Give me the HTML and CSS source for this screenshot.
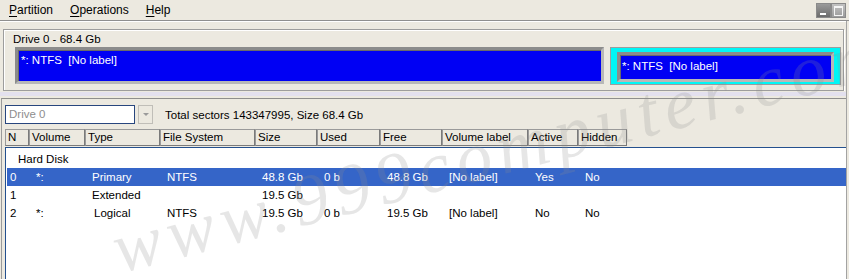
FILE: index.html
```html
<!DOCTYPE html>
<html>
<head>
  <title>Partition</title>
  <link rel="stylesheet" href="styles.css">
</head>
<body>
  <div class="app">
    <div class="menubar">
      <span class="menu"><u>P</u>artition</span>
      <span class="menu"><u>O</u>perations</span>
      <span class="menu"><u>H</u>elp</span>
      <div class="wincontrols">
        <span class="wbtn wmin"></span>
        <span class="wbtn wmax"></span>
      </div>
    </div>

    <div class="panes">
      <div class="top-pane">
        <div class="drive-frame">
          <div class="drive-title">Drive 0 - 68.4 Gb</div>
          <div class="parts">
            <div class="part part-big">*: NTFS&nbsp; [No label]</div>
            <div class="part-sel">
              <div class="part part-small">*: NTFS&nbsp; [No label]</div>
            </div>
          </div>
        </div>
      </div>

      <div class="splitter"></div>

      <div class="bottom-pane">
        <div class="toolbar">
          <div class="combo">Drive 0</div>
          <div class="combo-btn"><span class="arrow"></span></div>
          <div class="total">Total sectors 143347995, Size 68.4 Gb</div>
        </div>

        <div class="grid-head">
          <div class="hcell">N</div>
          <div class="hcell">Volume</div>
          <div class="hcell">Type</div>
          <div class="hcell">File System</div>
          <div class="hcell">Size</div>
          <div class="hcell">Used</div>
          <div class="hcell">Free</div>
          <div class="hcell">Volume label</div>
          <div class="hcell">Active</div>
          <div class="hcell">Hidden</div>
        </div>

        <div class="grid-body">
          <div class="disk-row">Hard Disk</div>
          <div class="row selected">
            <div>0</div><div>*:</div><div>Primary</div><div>NTFS</div><div>48.8 Gb</div>
            <div>0 b</div><div>48.8 Gb</div><div>[No label]</div><div>Yes</div><div>No</div>
          </div>
          <div class="row">
            <div>1</div><div></div><div>Extended</div><div></div><div>19.5 Gb</div>
            <div></div><div></div><div></div><div></div><div></div>
          </div>
          <div class="row">
            <div>2</div><div>*:</div><div class="indent">Logical</div><div>NTFS</div><div>19.5 Gb</div>
            <div>0 b</div><div>19.5 Gb</div><div>[No label]</div><div>No</div><div>No</div>
          </div>
        </div>
      </div>
    </div>

    <div class="watermark">www.999computer.com</div>
  </div>
</body>
</html>
```

FILE: styles.css
```css
:root {
  --bg: #ece9e0;
  --frame: #9d9d9d;
  --part-blue: #0000f4;
  --sel-blue: #3565c8;
}

body {
  margin: 0;
  background: var(--bg);
  font-family: "Liberation Sans", Arial, sans-serif;
  font-size: 11.5px;
  color: #000;
}

.app {
  position: relative;
  width: 849px;
  height: 279px;
  overflow: hidden;
}

/* menu bar */
.menubar {
  display: flex;
  align-items: center;
  height: 20px;
  padding-left: 9px;
  gap: 17px;
  border-bottom: 1px solid #8f8f8f;
  font-size: 12px;
}

.menu u {
  text-decoration-thickness: 1px;
  text-underline-offset: 2px;
}

.wincontrols {
  display: flex;
  margin-left: auto;
  margin-right: 3px;
  margin-top: 1px;
}

.wbtn {
  position: relative;
  width: 15px;
  height: 15px;
  box-sizing: border-box;
  border: 1px solid #8a8a8a;
}

.wmin {
  background: linear-gradient(#9a9a9a, #6c6c6c);
}

.wmin:after {
  content: "";
  position: absolute;
  left: 3px;
  bottom: 2px;
  width: 6px;
  height: 2px;
  background: #fff;
}

.wmax {
  background: linear-gradient(#c2c2c2, #9c9c9c);
}

.wmax:after {
  content: "";
  position: absolute;
  left: 2px;
  top: 2px;
  width: 7px;
  height: 7px;
  border: 1px solid #f4f4f4;
  border-top-width: 2px;
}

/* panes */
.panes {
  width: 846px;
  border-right: 1px solid #a3a3a3;
  box-shadow: inset 0 1px 0 #fff;
}

.top-pane {
  padding: 8px 2px 0 3px;
}

.drive-frame {
  border: 1px solid var(--frame);
  box-shadow: inset 1px 1px 0 #fff, 1px 1px 0 #fff;
  padding: 3px 2px 5px 11px;
}

.drive-title {
  line-height: 13px;
  margin-left: -2px;
}

.parts {
  display: flex;
  gap: 6px;
  margin-top: 1px;
  height: 38px;
}

.part {
  box-sizing: border-box;
  background: var(--part-blue);
  color: #fff;
  border: 3px solid;
  border-color: #8c8c8c #b8b8b8 #b8b8b8 #8c8c8c;
  box-shadow: inset 1px 1px 0 #6a6a6a;
  line-height: 13px;
}

.part-big {
  width: 589px;
  height: 37px;
  padding: 4px 0 0 3px;
}

.part-sel {
  box-sizing: border-box;
  flex: 1;
  background: #00f6f6;
  border: 1px solid var(--frame);
  padding: 4px 6px 2px 6px;
}

.part-small {
  height: 30px;
  padding: 5px 0 0 2px;
}

.splitter {
  height: 7px;
  background: linear-gradient(var(--bg) 0, var(--bg) 1px, #e3e0ee 1px, #e3e0ee 5px, var(--bg) 5px);
}

.bottom-pane {
  border-top: 1px solid #8e8e8e;
  border-left: 1px solid #9a9a9a;
  margin-left: 1px;
  height: 182px;
  padding: 6px 0 0 3px;
}

/* toolbar with drive combo */
.toolbar {
  display: flex;
  align-items: center;
  height: 19px;
}

.combo {
  box-sizing: border-box;
  width: 130px;
  height: 19px;
  border: 1px solid #28467e;
  background: #fff;
  color: #8e8e8e;
  padding: 2px 0 0 3px;
  line-height: 13px;
}

.combo-btn {
  box-sizing: border-box;
  width: 15px;
  height: 19px;
  margin-left: 3px;
  border: 1px solid #c0beb8;
  display: flex;
  align-items: center;
  justify-content: center;
}

.arrow {
  width: 0;
  height: 0;
  border-left: 3px solid transparent;
  border-right: 3px solid transparent;
  border-top: 3px solid #9a9a9a;
}

.total {
  margin-left: 12px;
}

/* partition list */
.grid-head {
  display: grid;
  grid-template-columns: 24px 56px 75px 95px 62px 63px 62px 86px 50px 49px;
  margin-top: 5px;
  height: 17px;
}

.hcell {
  box-sizing: border-box;
  border: 1px solid;
  border-color: #9a9a9a #7a7a7a #7a7a7a #9a9a9a;
  padding-left: 2px;
  line-height: 15px;
}

.grid-body {
  box-sizing: border-box;
  margin-top: 1px;
  height: 140px;
  width: 841px;
  background: #fff;
  border-top: 1px solid #24508e;
  border-left: 1px solid #24508e;
  padding: 2px 0 0 1px;
}

.disk-row {
  height: 18px;
  line-height: 18px;
  padding-left: 11px;
}

.row {
  display: grid;
  grid-template-columns: 22px 56px 75px 95px 62px 63px 62px 86px 50px 49px;
  height: 18px;
  line-height: 18px;
}

.row > div {
  padding-left: 7px;
  white-space: nowrap;
}

.row > div:first-child {
  padding-left: 3px;
}

.row .indent {
  padding-left: 9px;
}

.row.selected {
  background: var(--sel-blue);
  color: #fff;
}

/* watermark over the whole window */
.watermark {
  position: absolute;
  left: 114px;
  top: 214px;
  transform: rotate(-14.5deg);
  transform-origin: 0 50%;
  font-family: "Liberation Serif", serif;
  font-style: italic;
  font-size: 72px;
  letter-spacing: 7px;
  line-height: 72px;
  white-space: nowrap;
  color: rgba(140, 140, 140, 0.22);
  pointer-events: none;
}
```
